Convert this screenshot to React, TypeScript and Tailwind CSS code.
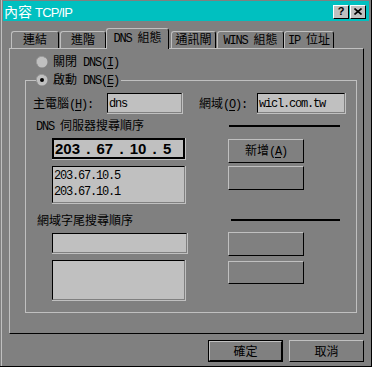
import React from "react";

const MONO = "font-['Liberation_Mono',monospace] tracking-[-1.2px]";

// splits a label into CJK and ASCII runs; "&X" underlines X (mnemonic)
function T({ s, mono = MONO }: { s: string; mono?: string }) {
  const parts = s.split(/([\x20-\x7e]+)/).filter(Boolean);
  return (
    <span className="whitespace-pre">
      {parts.map((p, i) => {
        if (!/^[\x20-\x7e]+$/.test(p)) return <span key={i}>{p}</span>;
        const bits = p.split(/(&.)/).filter(Boolean);
        return (
          <span key={i} className={mono}>
            {bits.map((b, j) =>
              b.length === 2 && b[0] === "&" ? (
                <span key={j} className="underline underline-offset-[2px]">
                  {b[1]}
                </span>
              ) : (
                b
              )
            )}
          </span>
        );
      })}
    </span>
  );
}

function Radio({ on }: { on?: boolean }) {
  return (
    <svg width="12" height="12" viewBox="0 0 12 12" className="shrink-0">
      <circle cx="6" cy="6" r="5.5" fill="#c0c0c0" />
      <path d="M1.8 9.2 A5 5 0 0 1 9.2 1.8" stroke="#9a9a9a" strokeWidth="1" fill="none" />
      {on && <circle cx="6" cy="6" r="2" fill="#000" />}
    </svg>
  );
}

function Sunken({ className = "", children }: { className?: string; children?: React.ReactNode }) {
  return (
    <div className={`border-r border-b border-[#c0c0c0] ${className}`}>
      <div className="h-full border border-black border-r-[#808080] border-b-[#808080] bg-[#c0c0c0]">
        {children}
      </div>
    </div>
  );
}

function Btn({ className = "", children }: { className?: string; children?: React.ReactNode }) {
  return (
    <button
      type="button"
      className={`flex shrink-0 items-center justify-center border border-[#c0c0c0] border-r-black border-b-black ${className}`}
    >
      {children}
    </button>
  );
}

function Tab({ label, w, ml, active }: { label: string; w: string; ml: string; active?: boolean }) {
  return (
    <div
      className={`flex shrink-0 justify-center rounded-t-[3px] border-t border-l border-r border-[#c0c0c0] border-r-black bg-[#808080] ${w} ${ml} ${
        active ? "h-[21px] pt-px" : "mb-px h-[17px]"
      }`}
    >
      <T s={label} />
    </div>
  );
}

export default function App() {
  return (
    <div className="h-[367px] w-[372px] overflow-hidden border-r border-b border-black bg-[#808080] font-['Noto_Sans_CJK_TC',sans-serif] text-[12px] leading-[14px] text-black">
      <div className="ml-px flex h-full flex-col border-l border-[#c0c0c0]">
        {/* title bar */}
        <div className="mt-px ml-px flex h-[20px] w-[366px] items-center bg-[#00c0c0]">
          <span className="ml-px pt-[2px] text-[14px] leading-[16px] text-white">
            內容
            <span className="ml-[3px] font-['Liberation_Sans',sans-serif] text-[13px] tracking-[-0.8px]">TCP/IP</span>
          </span>
          <div className="mt-px mr-[3px] ml-auto flex gap-px">
            <div className="flex h-[14px] w-[16px] items-center justify-center border border-white border-r-black border-b-black bg-[#c0c0c0] font-['Liberation_Sans',sans-serif] text-[11px] font-bold leading-none">
              ?
            </div>
            <div className="flex h-[14px] w-[16px] items-center justify-center border border-white border-r-black border-b-black bg-[#c0c0c0]">
              <svg width="8" height="7" viewBox="0 0 8 7">
                <path d="M0.5 0.5 L7.5 6.5 M7.5 0.5 L0.5 6.5" stroke="#000" strokeWidth="1.6" />
              </svg>
            </div>
          </div>
        </div>

        {/* tabs */}
        <div className="relative z-10 mt-[7px] -mb-px ml-[7px] flex h-[21px] items-end">
          <Tab label="連結" w="w-[48px]" ml="ml-[2px]" />
          <Tab label="進階" w="w-[46px]" ml="ml-px" />
          <Tab label="DNS 組態" w="w-[63px]" ml="ml-0" active />
          <Tab label="通訊閘" w="w-[45px]" ml="ml-[2px]" />
          <Tab label="WINS 組態" w="w-[67px]" ml="ml-px" />
          <Tab label="IP 位址" w="w-[50px]" ml="ml-0" />
        </div>

        {/* tab panel */}
        <div className="ml-[7px] h-[286px] w-[355px] border border-[#c0c0c0] border-r-black border-b-black">
          <div className="mt-[6px] ml-[26px] flex h-[14px] items-center">
            <Radio />
            <span className="ml-[5px]">
              <T s="關閉 DNS(&I)" />
            </span>
          </div>

          <div className="relative mt-[11px] ml-[15px] h-[233px] w-[332px] border border-[#c0c0c0]">
            <div className="absolute -top-[8px] left-[10px] flex h-[14px] items-center bg-[#808080] pr-[2px]">
              <Radio on />
              <span className="ml-[5px]">
                <T s="啟動 DNS(&E)" />
              </span>
            </div>

            {/* host / domain */}
            <div className="mt-[12px] flex h-[21px] items-center">
              <span className="ml-[7px] w-[74px]">
                <T s="主電腦(&H):" />
              </span>
              <Sunken className="h-[21px] w-[76px]">
                <div className="flex h-full items-center pl-px">
                  <T s="dns" />
                </div>
              </Sunken>
              <span className="ml-[16px] w-[58px]">
                <T s="網域(&O):" />
              </span>
              <Sunken className="h-[21px] w-[89px]">
                <div className="flex h-full items-center pl-px">
                  <T s="wicl.com.tw" />
                </div>
              </Sunken>
            </div>

            {/* DNS server order */}
            <div className="mt-[5px] flex h-[14px] items-center">
              <span className="ml-[10px] w-[193px]">
                <T s="DNS 伺服器搜尋順序" />
              </span>
              <div className="h-[2px] w-[111px] bg-black" />
            </div>

            <div className="mt-[5px] flex items-start">
              <div className="ml-[26px] h-[22px] w-[134px] border-r border-b border-[#c0c0c0]">
                <div className="flex h-full items-center border-2 border-black bg-[#c0c0c0] pl-px font-['Liberation_Sans',sans-serif] text-[15px] leading-none font-bold [word-spacing:2px]">
                  203 . 67 . 10 . 5
                </div>
              </div>
              <Btn className="mt-px ml-[42px] h-[24px] w-[76px]">
                <T s="新增(&A)" />
              </Btn>
            </div>

            <div className="mt-[3px] flex items-start">
              <Sunken className="ml-[26px] h-[38px] w-[134px]">
                <div className="pl-px leading-[13px]">
                  <div>
                    <T s="203.67.10.5" />
                  </div>
                  <div>
                    <T s="203.67.10.1" />
                  </div>
                </div>
              </Sunken>
              <Btn className="ml-[42px] h-[24px] w-[76px]" />
            </div>

            {/* domain suffix order */}
            <div className="mt-[9px] flex h-[14px] items-center">
              <span className="ml-[11px] w-[194px]">
                <T s="網域字尾搜尋順序" />
              </span>
              <div className="h-[2px] w-[109px] bg-black" />
            </div>

            <div className="mt-[5px] flex items-start">
              <Sunken className="mt-px ml-[26px] h-[21px] w-[136px]" />
              <Btn className="ml-[40px] h-[24px] w-[76px]" />
            </div>

            <div className="mt-[4px] flex items-start">
              <Sunken className="ml-[26px] h-[41px] w-[134px]" />
              <Btn className="mt-px ml-[42px] h-[23px] w-[76px]" />
            </div>
          </div>
        </div>

        {/* dialog buttons */}
        <div className="mt-[6px] ml-[206px] flex gap-[6px]">
          <div className="h-[22px] w-[75px] border border-black">
            <Btn className="h-full w-full">確定</Btn>
          </div>
          <Btn className="h-[22px] w-[75px]">取消</Btn>
        </div>
      </div>
    </div>
  );
}
